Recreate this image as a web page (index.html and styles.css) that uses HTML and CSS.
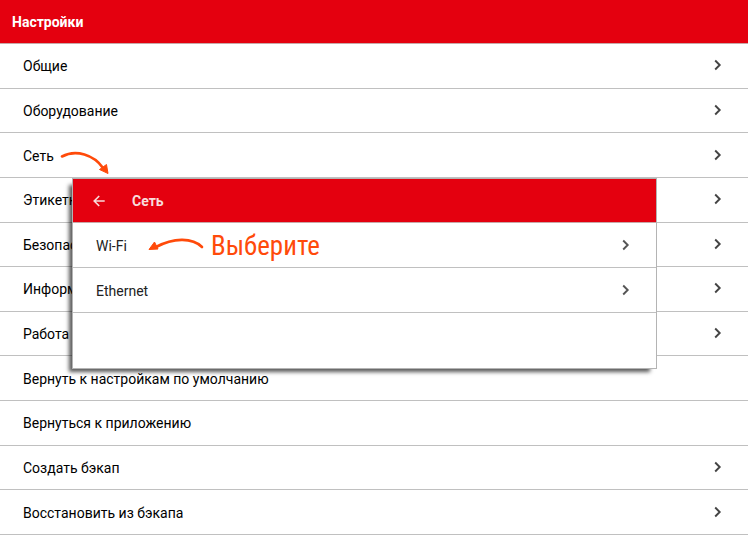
FILE: index.html
```html
<!DOCTYPE html>
<html lang="ru">
<head>
  <meta charset="utf-8">
  <meta name="viewport" content="width=device-width, initial-scale=1">
  <title>Настройки</title>
  <link rel="stylesheet" href="styles.css">
</head>
<body>
  <svg class="sprite" width="0" height="0" aria-hidden="true">
    <symbol id="chevron" viewBox="0 0 8 12">
      <path d="M1.200 1.500L5.700 6L1.200 10.500" fill="none" stroke="currentColor" stroke-width="1.9"/>
    </symbol>
  </svg>

  <header class="bar">
    <h1>Настройки</h1>
  </header>

  <main>
    <nav class="list">
      <a class="row" href="#general">Общие<svg class="chevron"><use href="#chevron"/></svg></a>
      <a class="row" href="#equipment">Оборудование<svg class="chevron"><use href="#chevron"/></svg></a>
      <a class="row" href="#network">Сеть<svg class="chevron"><use href="#chevron"/></svg></a>
      <a class="row" href="#labels">Этикетки<svg class="chevron"><use href="#chevron"/></svg></a>
      <a class="row" href="#security">Безопасность<svg class="chevron"><use href="#chevron"/></svg></a>
      <a class="row" href="#about">Информация об устройстве<svg class="chevron"><use href="#chevron"/></svg></a>
      <a class="row" href="#work">Работа с приложением<svg class="chevron"><use href="#chevron"/></svg></a>
      <a class="row" href="#reset">Вернуть к настройкам по умолчанию</a>
      <a class="row" href="#back">Вернуться к приложению</a>
      <a class="row" href="#backup">Создать бэкап<svg class="chevron"><use href="#chevron"/></svg></a>
      <a class="row" href="#restore">Восстановить из бэкапа<svg class="chevron"><use href="#chevron"/></svg></a>
    </nav>

    <section class="panel">
      <header class="bar panel-bar">
        <button class="back" type="button" aria-label="Назад">
          <svg width="12" height="12" viewBox="0 0 12 12">
            <path d="M11.7 6H1.2M6.2 1L1.2 6L6.2 11" fill="none" stroke="currentColor" stroke-width="1.6"/>
          </svg>
        </button>
        <h2>Сеть</h2>
      </header>
      <nav class="panel-list">
        <a class="row" href="#wifi">Wi-Fi<svg class="chevron"><use href="#chevron"/></svg></a>
        <a class="row" href="#ethernet">Ethernet<svg class="chevron"><use href="#chevron"/></svg></a>
      </nav>
      <div class="hint">
        <svg width="56" height="20" viewBox="0 0 56 20">
          <path d="M54 11C44 1 25 2 8 11" fill="none" stroke="currentColor" stroke-width="2.6" stroke-linecap="round"/>
          <path d="M1 13.500L6.500 6L10 13Z" fill="currentColor" stroke="currentColor" stroke-width="1" stroke-linejoin="round"/>
        </svg>
        <span>Выберите</span>
      </div>
    </section>

    <svg class="pointer" width="52" height="28" viewBox="0 0 52 28">
      <path d="M2 6.500C16 -1 34 5 43 18" fill="none" stroke="currentColor" stroke-width="2.600" stroke-linecap="round"/>
      <path d="M39.500 19.500L46.500 14.500L48 23.500Z" fill="currentColor" stroke="currentColor" stroke-width="1" stroke-linejoin="round"/>
    </svg>
  </main>
</body>
</html>
```
FILE: styles.css
```css
* {
    box-sizing: border-box;
}
body {
    margin: 0;
    background: #fff;
    color: #000;
    font-family: Roboto, sans-serif;
    font-size: 14px;
    line-height: 20px;
}
main {
    position: relative;
}
.sprite {
    position: absolute;
}
.bar {
    display: flex;
    align-items: center;
    height: 44px;
    padding: 0 12px;
    background: #e4000f;
    color: #fff;
    border-bottom: 1px solid #c8a8a8;
}
h1, h2 {
    margin: 0;
    font-size: 14px;
    font-weight: 700;
}
.list {
    display: grid;
    grid-auto-rows: 1fr;
    min-height: 491px;
}
.row {
    display: flex;
    align-items: center;
    justify-content: space-between;
    padding: 1px 26px 0 23px;
    border-bottom: 1px solid #c0c0c0;
    color: inherit;
    text-decoration: none;
}
.chevron {
    width: 8px;
    height: 12px;
    margin-bottom: 2px;
    color: #444;
}

/* submenu over the list */
.panel {
    position: absolute;
    top: 134px;
    left: 72px;
    right: 91px;
    height: 191px;
    background: #fff;
    border: 1px solid #b4b4b4;
    box-shadow: -5px 5px 4px -2px rgba(0, 0, 0, 0.65);
}
.panel-bar {
    padding: 0 20px;
    gap: 27px;
    color: #f8dcdc;
}
.back {
    display: flex;
    padding: 0;
    border: 0;
    background: none;
    color: inherit;
    cursor: pointer;
}
.panel-list {
    color: #222;
}
.panel-list .row {
    height: 45px;
}
.panel-list .chevron {
    color: #555;
}

/* hand-drawn notes */
.hint {
    position: absolute;
    top: 51px;
    left: 75px;
    display: flex;
    align-items: center;
    gap: 7px;
    color: #ff4a0a;
    font-family: "Roboto Condensed", Roboto, sans-serif;
    font-size: 27px;
    line-height: 32px;
}
.pointer {
    position: absolute;
    top: 106px;
    left: 60px;
    color: #ff4a0a;
}
```
